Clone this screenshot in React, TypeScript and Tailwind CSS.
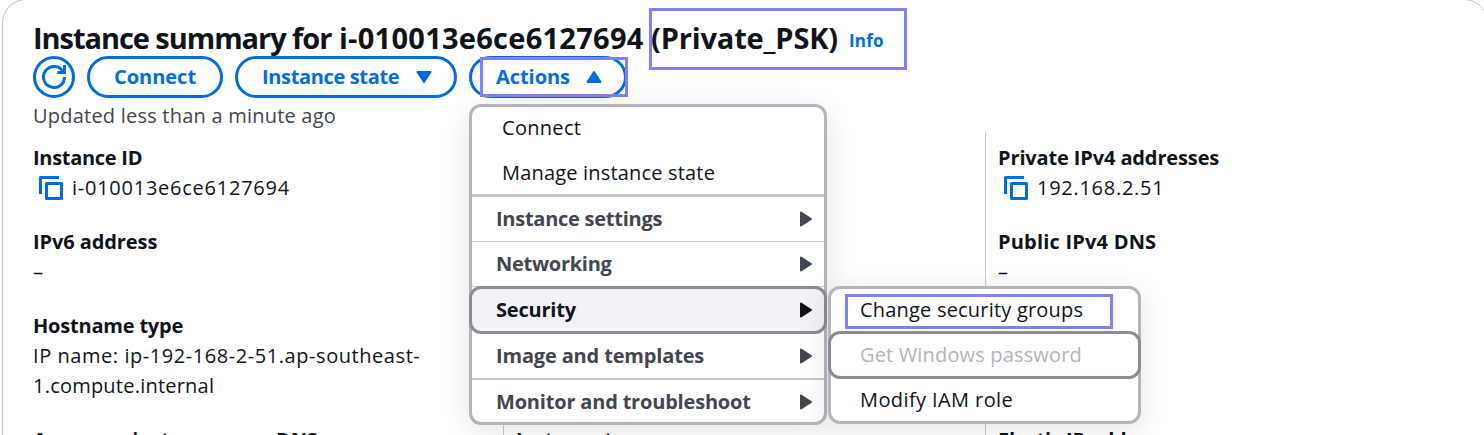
import type { ReactNode } from "react";

function CopyIcon() {
  return (
    <svg width="24" height="24" viewBox="0 0 24 24" fill="none" stroke="#006ce0" strokeWidth="3" strokeLinejoin="round" className="shrink-0">
      <path d="M1.5 18V1.5H20" />
      <path d="M7.5 7.5H22.5V22.5H7.5Z" />
    </svg>
  );
}

function RefreshIcon() {
  return (
    <svg width="24" height="24" viewBox="0 0 24 24" fill="none" stroke="#006ce0" strokeWidth="3" className="shrink-0">
      <path d="M22.5 12A10.5 10.5 0 1 1 21.5 7.5" />
      <path d="M15.3 7.5H22.5V0" />
    </svg>
  );
}

function Caret({ className, d }: { className: string; d: string }) {
  return (
    <svg width="16" height="16" viewBox="0 0 16 16" className={className} fill="currentColor" stroke="currentColor" strokeWidth="2" strokeLinejoin="round">
      <path d={d} />
    </svg>
  );
}

const RIGHT = "M3 1.6L13 8L3 14.4Z";
const DOWN = "M1.5 3L14.5 3L8 13Z";
const UP = "M1.5 13L14.5 13L8 3Z";

function Field({ label, track, children }: { label: string; track: string; children?: ReactNode }) {
  return (
    <div>
      <div className={`font-bold whitespace-nowrap ${track}`}>{label}</div>
      {children}
    </div>
  );
}

function MenuGroup({ label, track, className }: { label: string; track: string; className: string }) {
  return (
    <div className={`flex items-center justify-between font-bold ${className}`}>
      <span className={track}>{label}</span>
      <Caret className="mr-[10px]" d={RIGHT} />
    </div>
  );
}

function SecurityMenu() {
  return (
    <div className="absolute left-[359px] top-[182px] h-[138px] w-[313px] rounded-[12px] border-[3px] border-[#b4b4bb] bg-white shadow-[0_6px_30px_1px_rgba(0,7,22,0.10)]">
      <div className="flex h-[42px] items-center pl-[29px] tracking-[0.2px]">Change security groups</div>
      <div className="-mx-[3px] flex h-[48px] items-center rounded-[12px] border-[3px] border-[#8c8c94] pl-[29px] tracking-[0.16px] text-[#b4b4bb]">
        Get Windows password
      </div>
      <div className="flex h-[42px] items-center pl-[29px] tracking-[0.4px]">Modify IAM role</div>
      <div className="absolute left-[14px] top-[5px] h-[35px] w-[268px] border-[3px] border-[#8080ff]" />
    </div>
  );
}

function ActionsMenu() {
  return (
    <div className="absolute left-0 top-[48px] z-10 h-[321px] w-[358px] text-[#0f141a]">
      <div className="h-full rounded-[12px] border-[3px] border-[#b4b4bb] bg-white shadow-[0_6px_30px_1px_rgba(0,7,22,0.10)]">
        <div className="flex h-[42px] items-center pl-[30px] tracking-[0.3px]">Connect</div>
        <div className="flex h-[48px] items-center border-b-[3px] border-[#c6c6cd] pl-[30px] pt-[3px] tracking-[0.18px]">Manage instance state</div>
        <MenuGroup label="Instance settings" track="tracking-[-0.26px]" className="h-[45px] border-b border-[#c6c6cd] pl-[24px] text-[#424650]" />
        <MenuGroup label="Networking" track="tracking-[-0.27px]" className="h-[45px] border-b border-[#c6c6cd] pl-[24px] text-[#424650]" />
        <MenuGroup label="Security" track="tracking-[-0.2px]" className="-mx-[3px] -mt-px h-[48px] rounded-[12px] border-[3px] border-[#8c8c94] bg-[#f3f3f7] pl-[24px]" />
        <MenuGroup label="Image and templates" track="tracking-[-0.16px]" className="h-[46px] border-b-2 border-[#c6c6cd] pl-[24px] text-[#424650]" />
        <MenuGroup label="Monitor and troubleshoot" track="tracking-[-0.19px]" className="h-[43px] pl-[24px] text-[#424650]" />
      </div>
      <SecurityMenu />
    </div>
  );
}

const BUTTON = "flex h-[42px] items-center rounded-full border-[3px] border-[#006ce0] font-bold text-[#006ce0]";

export default function App() {
  return (
    <div className="h-[435px] w-[1484px] overflow-hidden bg-white pl-[2px] font-['Open_Sans','Noto_Sans',sans-serif] text-[20px] leading-[30px] text-[#0f141a]">
      <div className="-mt-px h-[500px] w-[1486px] rounded-[24px] border border-[#c6c6cd] pl-[30px] pt-[19px]">
        <div className="flex h-[37px] items-center whitespace-nowrap text-[29px] font-bold">
          <h1 className="flex w-[616px]">
            <span className="w-[306px] tracking-[-1.05px]">Instance summary for </span>
            <span className="tracking-[0.27px]">i-010013e6ce6127694</span>
          </h1>
          <div className="relative flex items-center">
            <span className="w-[200px] pl-[2px] tracking-[-0.15px]">(Private_PSK)</span>
            <a className="pt-[7px] text-[17px] leading-[24px] tracking-[0.2px] text-[#006ce0]">Info</a>
            <div className="absolute left-0 top-[-14px] h-[62px] w-[258px] border-[3px] border-[#8080ff]" />
          </div>
        </div>
        <div className="flex h-[42px] gap-[12px]">
          <button className={`${BUTTON} w-[42px] justify-center`}>
            <RefreshIcon />
          </button>
          <button className={`${BUTTON} w-[136px] justify-center tracking-[0px]`}>Connect</button>
          <button className={`${BUTTON} w-[222px] justify-between pl-[24px] pr-[22px]`}>
            <span className="tracking-[-0.35px]">Instance state</span>
            <Caret d={DOWN} className="" />
          </button>
          <div className="relative">
            <button className={`${BUTTON} w-[158px] justify-between pl-[24px] pr-[22px]`}>
              <span className="tracking-[-0.05px]">Actions</span>
              <Caret d={UP} className="" />
            </button>
            <div className="absolute left-[11px] top-px h-[40px] w-[148px] border-[3px] border-[#8080ff]" />
            <ActionsMenu />
          </div>
        </div>
        <div className="mt-[3px] tracking-[0.22px] text-[#424650]">Updated less than a minute ago</div>
        <div className="grid h-[400px] grid-cols-[470px_482px_1fr]">
          <div className="flex flex-col gap-[24px] pt-[12px]">
            <Field label="Instance ID" track="tracking-[-0.29px]">
              <div className="flex items-center pl-[6px]">
                <CopyIcon />
                <span className="pl-[9px] tracking-[0.75px]">i-010013e6ce6127694</span>
              </div>
            </Field>
            <Field label="IPv6 address" track="tracking-[-0.09px]">
              <div>–</div>
            </Field>
            <Field label="Hostname type" track="tracking-[-0.2px]">
              <div className="whitespace-nowrap tracking-[0.56px]">IP name: ip-192-168-2-51.ap-southeast-</div>
              <div className="tracking-[0.22px]">1.compute.internal</div>
            </Field>
            <Field label="Answer private resource DNS" track="tracking-[-0.28px]" />
          </div>
          <div className="border-l border-[#c6c6cd] pl-[12px] pt-[294px]">
            <Field label="Instance type" track="tracking-[-0.3px]" />
          </div>
          <div className="flex flex-col gap-[24px] border-l border-[#c6c6cd] pl-[12px] pt-[12px]">
            <Field label="Private IPv4 addresses" track="tracking-[-0.13px]">
              <div className="flex items-center pl-[6px]">
                <CopyIcon />
                <span className="pl-[9px] tracking-[0.72px]">192.168.2.51</span>
              </div>
            </Field>
            <Field label="Public IPv4 DNS" track="tracking-[0.2px]">
              <div>–</div>
            </Field>
            <div className="mt-[114px]">
              <Field label="Elastic IP addresses" track="tracking-[-0.2px]" />
            </div>
          </div>
        </div>
      </div>
    </div>
  );
}
